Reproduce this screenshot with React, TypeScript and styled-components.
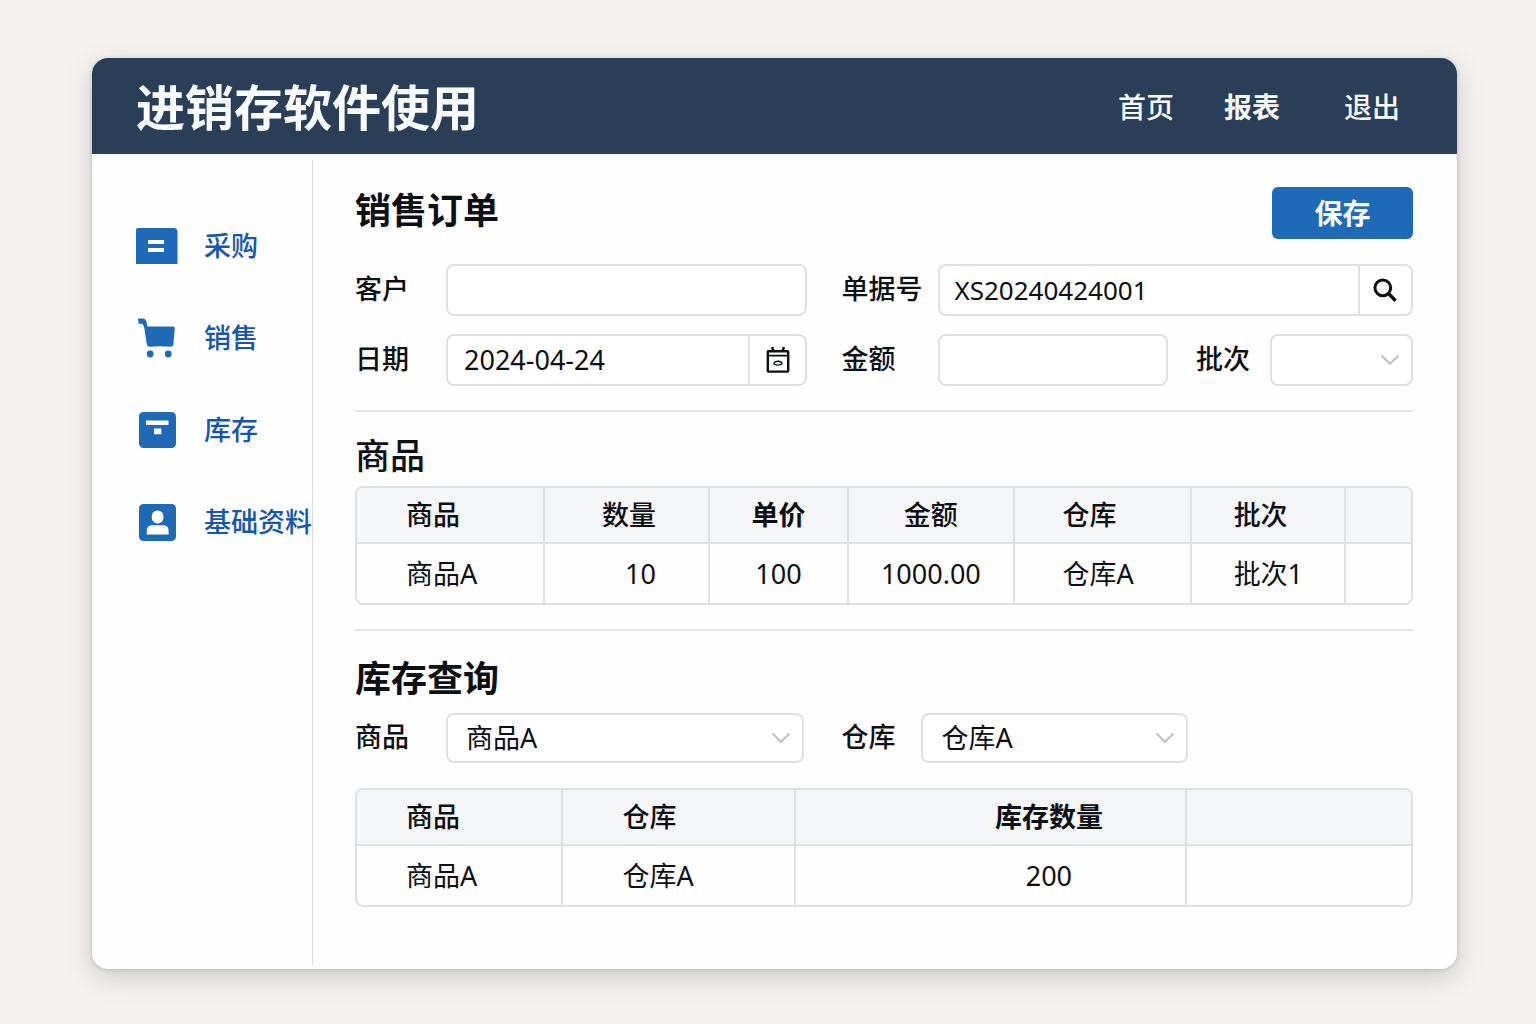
import React from "react";
import styled, { createGlobalStyle } from "styled-components";

const line = "#dee0e2";
const blue = "#1f6ab6";
const ink = "#0c0f13";

const GlobalStyle = createGlobalStyle`
  *, *::before, *::after { box-sizing: border-box; }
  body {
    margin: 0;
    background: #f4f3f0;
    color: ${ink};
    font-family: "Noto Sans", "Noto Sans CJK SC", sans-serif;
    font-size: 27px;
    line-height: 36px;
  }
  button, input, select { font: inherit; color: inherit; }
`;

const Page = styled.div`
  display: flex;
  min-height: 100vh;
  padding: 58px 79px 55px 92px;
`;

const Window = styled.div`
  flex: 1;
  min-width: 0;
  display: flex;
  flex-direction: column;
  border-radius: 16px;
  overflow: hidden;
  background: #fefefe;
  box-shadow: 0 8px 28px rgba(40, 38, 34, 0.2), 0 1px 4px rgba(40, 38, 34, 0.16);
`;

const Header = styled.header`
  display: flex;
  align-items: center;
  justify-content: space-between;
  height: 96px;
  padding: 2px 57px 0 44px;
  background: #2a3e57;
  color: #f8fcff;
`;

const AppTitle = styled.h1`
  margin: 0;
  font-size: 49px;
  line-height: 64px;
  font-weight: 700;
`;

const TopNav = styled.nav`
  display: flex;
  gap: 50px;
`;

const TopLink = styled.a<{ $strong?: boolean; $apart?: boolean }>`
  color: inherit;
  text-decoration: none;
  font-size: 28px;
  font-weight: ${(p) => (p.$strong ? 700 : 500)};
  margin-left: ${(p) => (p.$apart ? "14px" : "0")};
`;

const Body = styled.div`
  flex: 1;
  display: grid;
  grid-template-columns: 221px minmax(0, 1fr);
  padding: 6px 0 4px;
`;

const Sidebar = styled.nav`
  padding: 40px 0 0 44px;
  border-right: 1px solid #d9dbde;
`;

const SideLink = styled.a`
  display: grid;
  grid-template-columns: 42px max-content;
  align-items: center;
  justify-items: center;
  gap: 26px;
  height: 92px;
  color: #1556ae;
  font-weight: 500;
  text-decoration: none;
`;

const Main = styled.main`
  padding: 27px 44px 40px 42px;
`;

const TitleBar = styled.div`
  display: flex;
  justify-content: space-between;
  align-items: flex-start;
  margin-bottom: 25px;
`;

const Heading = styled.h2`
  margin: 0;
  font-size: 36px;
  line-height: 48px;
  font-weight: 700;
`;

const SubHeading = styled.h3`
  margin: 0 0 10px;
  font-size: 35px;
  line-height: 40px;
  font-weight: 500;
`;

const SaveButton = styled.button`
  width: 141px;
  height: 52px;
  padding: 0;
  border: 0;
  border-radius: 6px;
  background: ${blue};
  color: #f8fcff;
  font-size: 28px;
  font-weight: 700;
`;

const FormGrid = styled.form`
  display: grid;
  grid-template-columns: 91px minmax(0, 395fr) 97px minmax(0, 474fr);
  grid-auto-rows: 52px;
  row-gap: 18px;
  align-items: center;
`;

const Label = styled.label`
  white-space: nowrap;
  padding-bottom: 2px;
  font-weight: 500;
`;

const FieldArea = styled.div<{ $before?: boolean }>`
  display: flex;
  align-items: center;
  gap: 28px;
  height: 100%;
  margin-right: ${(p) => (p.$before ? "34px" : "0")};
`;

const TextBox = styled.input`
  flex: 1;
  min-width: 0;
  width: 100%;
  height: 100%;
  padding: 0 16px;
  border: 2px solid ${line};
  border-radius: 8px;
  background: #fff;
`;

const Combo = styled.div`
  flex: 1;
  display: flex;
  height: 100%;
  border: 2px solid ${line};
  border-radius: 8px;
  background: #fff;
  overflow: hidden;
`;

const ComboInput = styled.input<{ $small?: boolean }>`
  flex: 1;
  min-width: 0;
  padding: 0 0 0 ${(p) => (p.$small ? "14px" : "16px")};
  border: 0;
  background: none;
  font-size: ${(p) => (p.$small ? "26px" : "27px")};
`;

const ComboButton = styled.button<{ $wide?: boolean }>`
  display: grid;
  place-items: center;
  width: ${(p) => (p.$wide ? "57px" : "53px")};
  padding: 0;
  border: 0;
  border-left: 2px solid ${line};
  background: none;
`;

const SelectWrap = styled.div<{ $width: string }>`
  position: relative;
  flex: 0 0 ${(p) => p.$width};
  height: 100%;
`;

const SelectBox = styled.select`
  appearance: none;
  width: 100%;
  height: 100%;
  padding: 0 44px 0 18px;
  border: 2px solid ${line};
  border-radius: 8px;
  background: #fff;
`;

const Chevron = styled.svg`
  position: absolute;
  right: 13px;
  top: 50%;
  margin-top: -6px;
  pointer-events: none;
`;

const BatchGroup = styled.div`
  display: grid;
  grid-template-columns: 74px 143px;
  align-items: center;
  height: 100%;
`;

const Divider = styled.hr`
  height: 2px;
  margin: 24px 0;
  border: 0;
  background: #e3e4e5;
`;

const FilterGrid = styled.div`
  display: grid;
  grid-template-columns: 91px minmax(0, 395fr) 80px minmax(0, 266fr) minmax(0, 225fr);
  align-items: center;
  height: 50px;
  margin: 10px 0 25px;
`;

const FilterField = styled.div<{ $gap?: boolean }>`
  display: flex;
  height: 100%;
  margin-right: ${(p) => (p.$gap ? "37px" : "0")};
`;

const Table = styled.table`
  width: 100%;
  table-layout: fixed;
  border-collapse: separate;
  border-spacing: 0;
  border: 2px solid ${line};
  border-radius: 8px;
  overflow: hidden;
`;

const Col = styled.col<{ $share: number }>`
  width: ${(p) => p.$share}%;
`;

type Align = "left" | "center" | "right";

const HeadCell = styled.th<{ $align?: Align; $pad?: string; $strong?: boolean }>`
  height: 56px;
  padding: ${(p) => p.$pad || "0"};
  background: #f5f6f8;
  border-bottom: 2px solid ${line};
  text-align: ${(p) => p.$align || "center"};
  font-weight: ${(p) => (p.$strong ? 700 : 500)};
  & + & { border-left: 2px solid ${line}; }
`;

const Cell = styled.td<{ $align?: Align; $pad?: string }>`
  height: 59px;
  padding: ${(p) => p.$pad || "0"};
  text-align: ${(p) => p.$align || "center"};
  & + & { border-left: 2px solid ${line}; }
`;

type Column = {
  title: string;
  value: string;
  share: number;
  align?: Align;
  pad?: string;
  strong?: boolean;
};

const itemColumns: Column[] = [
  { title: "商品", value: "商品A", share: 17.6, align: "left", pad: "0 0 0 49px" },
  { title: "数量", value: "10", share: 15.7, align: "right", pad: "0 52px 0 0" },
  { title: "单价", value: "100", share: 13.2, strong: true },
  { title: "金额", value: "1000.00", share: 15.7 },
  { title: "仓库", value: "仓库A", share: 16.8, align: "left", pad: "0 0 0 48px" },
  { title: "批次", value: "批次1", share: 14.6, align: "left", pad: "0 0 0 42px" },
  { title: "", value: "", share: 6.4 },
];

const stockColumns: Column[] = [
  { title: "商品", value: "商品A", share: 19.4, align: "left", pad: "0 0 0 49px" },
  { title: "仓库", value: "仓库A", share: 22.1, align: "left", pad: "0 0 0 59px" },
  { title: "库存数量", value: "200", share: 37.1, pad: "0 0 0 116px", strong: true },
  { title: "", value: "", share: 21.4 },
];

function DataTable({ columns }: { columns: Column[] }) {
  return (
    <Table>
      <colgroup>
        {columns.map((c, i) => (
          <Col key={i} $share={c.share} />
        ))}
      </colgroup>
      <thead>
        <tr>
          {columns.map((c, i) => (
            <HeadCell key={i} scope="col" $align={c.align} $pad={c.pad} $strong={c.strong}>
              {c.title}
            </HeadCell>
          ))}
        </tr>
      </thead>
      <tbody>
        <tr>
          {columns.map((c, i) => (
            <Cell key={i} $align={c.align} $pad={c.pad}>
              {c.value}
            </Cell>
          ))}
        </tr>
      </tbody>
    </Table>
  );
}

function Dropdown({ id, options, width }: { id: string; options: string[]; width: string }) {
  return (
    <SelectWrap $width={width}>
      <SelectBox id={id} defaultValue={options[0]}>
        {options.map((o) => (
          <option key={o} value={o}>
            {o}
          </option>
        ))}
      </SelectBox>
      <Chevron width="20" height="12" viewBox="0 0 20 12" aria-hidden="true">
        <path d="M1.5 1.5 L10 9.8 L18.5 1.5" fill="none" stroke="#bfc1c3" strokeWidth="2" />
      </Chevron>
    </SelectWrap>
  );
}

const PurchaseIcon = () => (
  <svg width="42" height="36" viewBox="0 0 42 36" aria-hidden="true">
    <path d="M2 0H37.5Q41.5 0 41.5 4V36H0V2Q0 0 2 0Z" fill={blue} />
    <path d="M12 12H28V16H12ZM12 20H28V24H12Z" fill="#fff" />
  </svg>
);

const CartIcon = () => (
  <svg width="38" height="40" viewBox="0 0 38 40" aria-hidden="true">
    <path
      d="M0 0.5H4.5C8 0.5 9 3.5 9.3 8.5H35Q37 8.5 36.8 10.5L35.4 26.5Q35.2 28.8 32.8 28.8Q22 27.6 12 28.8Q9.3 29 8.8 26.2L6.4 10.5Q5.6 6.2 3.6 5.8H0.6Z"
      fill={blue}
    />
    <circle cx="12.2" cy="36" r="3.4" fill={blue} />
    <circle cx="30.2" cy="36" r="3.4" fill={blue} />
  </svg>
);

const StockIcon = () => (
  <svg width="37" height="36" viewBox="0 0 37 36" aria-hidden="true">
    <rect width="37" height="36" rx="4.5" fill={blue} />
    <path d="M7 8.5H29.5V13H7ZM15 16.5H22.3V22.3H15Z" fill="#fff" />
  </svg>
);

const PersonIcon = () => (
  <svg width="37" height="37" viewBox="0 0 37 37" aria-hidden="true">
    <rect width="37" height="37" rx="4.5" fill={blue} />
    <rect x="12.8" y="6.5" width="11.6" height="13" rx="5.6" fill="#fff" />
    <path d="M7.8 30.5V27C7.8 23 10 21.3 14 21.3H23.5C27.5 21.3 29.6 23 29.6 27V30.5Z" fill="#fff" />
  </svg>
);

const CalendarIcon = () => (
  <svg width="26" height="28" viewBox="0 0 26 28" fill="none" stroke={ink} aria-hidden="true">
    <rect x="2.8" y="5.2" width="20.4" height="20.4" rx="0.6" strokeWidth="2.4" />
    <path d="M3 9.6H23" strokeWidth="1.8" />
    <path d="M8.6 5L7 1M17.4 5L19 1" strokeWidth="2.4" />
    <path d="M9 18C9 16.2 10.8 15.2 13 15.2S17 16.2 17 18Q13 20.2 9 18Z" strokeWidth="1.4" />
  </svg>
);

const SearchIcon = () => (
  <svg width="26" height="26" viewBox="0 0 26 26" fill="none" stroke={ink} aria-hidden="true">
    <circle cx="10.8" cy="10.8" r="7.9" strokeWidth="3" />
    <path d="M16.2 16.2L23.6 23.8" strokeWidth="3.4" />
  </svg>
);

const sideItems = [
  { label: "采购", href: "#purchase", icon: <PurchaseIcon /> },
  { label: "销售", href: "#sales", icon: <CartIcon /> },
  { label: "库存", href: "#stock", icon: <StockIcon /> },
  { label: "基础资料", href: "#base-data", icon: <PersonIcon /> },
];

export default function App() {
  return (
    <>
      <GlobalStyle />
      <Page>
        <Window>
          <Header>
            <AppTitle>进销存软件使用</AppTitle>
            <TopNav>
              <TopLink href="#home">首页</TopLink>
              <TopLink href="#reports" $strong>报表</TopLink>
              <TopLink href="#logout" $apart>退出</TopLink>
            </TopNav>
          </Header>
          <Body>
            <Sidebar>
              {sideItems.map((item) => (
                <SideLink key={item.label} href={item.href}>
                  {item.icon}
                  <span>{item.label}</span>
                </SideLink>
              ))}
            </Sidebar>
            <Main>
              <TitleBar>
                <Heading>销售订单</Heading>
                <SaveButton type="submit" form="order">保存</SaveButton>
              </TitleBar>
              <FormGrid id="order" onSubmit={(e) => e.preventDefault()}>
                <Label htmlFor="customer">客户</Label>
                <FieldArea $before>
                  <TextBox id="customer" type="text" />
                </FieldArea>
                <Label htmlFor="number">单据号</Label>
                <FieldArea>
                  <Combo>
                    <ComboInput id="number" type="text" defaultValue="XS20240424001" $small />
                    <ComboButton type="button" aria-label="查找">
                      <SearchIcon />
                    </ComboButton>
                  </Combo>
                </FieldArea>
                <Label htmlFor="date">日期</Label>
                <FieldArea $before>
                  <Combo>
                    <ComboInput id="date" type="text" defaultValue="2024-04-24" />
                    <ComboButton type="button" aria-label="选择日期" $wide>
                      <CalendarIcon />
                    </ComboButton>
                  </Combo>
                </FieldArea>
                <Label htmlFor="amount">金额</Label>
                <FieldArea>
                  <TextBox id="amount" type="text" />
                  <BatchGroup>
                    <Label htmlFor="batch">批次</Label>
                    <Dropdown id="batch" options={[""]} width="143px" />
                  </BatchGroup>
                </FieldArea>
              </FormGrid>
              <Divider />
              <SubHeading>商品</SubHeading>
              <DataTable columns={itemColumns} />
              <Divider />
              <Heading>库存查询</Heading>
              <FilterGrid>
                <Label htmlFor="product">商品</Label>
                <FilterField $gap>
                  <Dropdown id="product" options={["商品A"]} width="100%" />
                </FilterField>
                <Label htmlFor="warehouse">仓库</Label>
                <FilterField>
                  <Dropdown id="warehouse" options={["仓库A"]} width="100%" />
                </FilterField>
              </FilterGrid>
              <DataTable columns={stockColumns} />
            </Main>
          </Body>
        </Window>
      </Page>
    </>
  );
}
